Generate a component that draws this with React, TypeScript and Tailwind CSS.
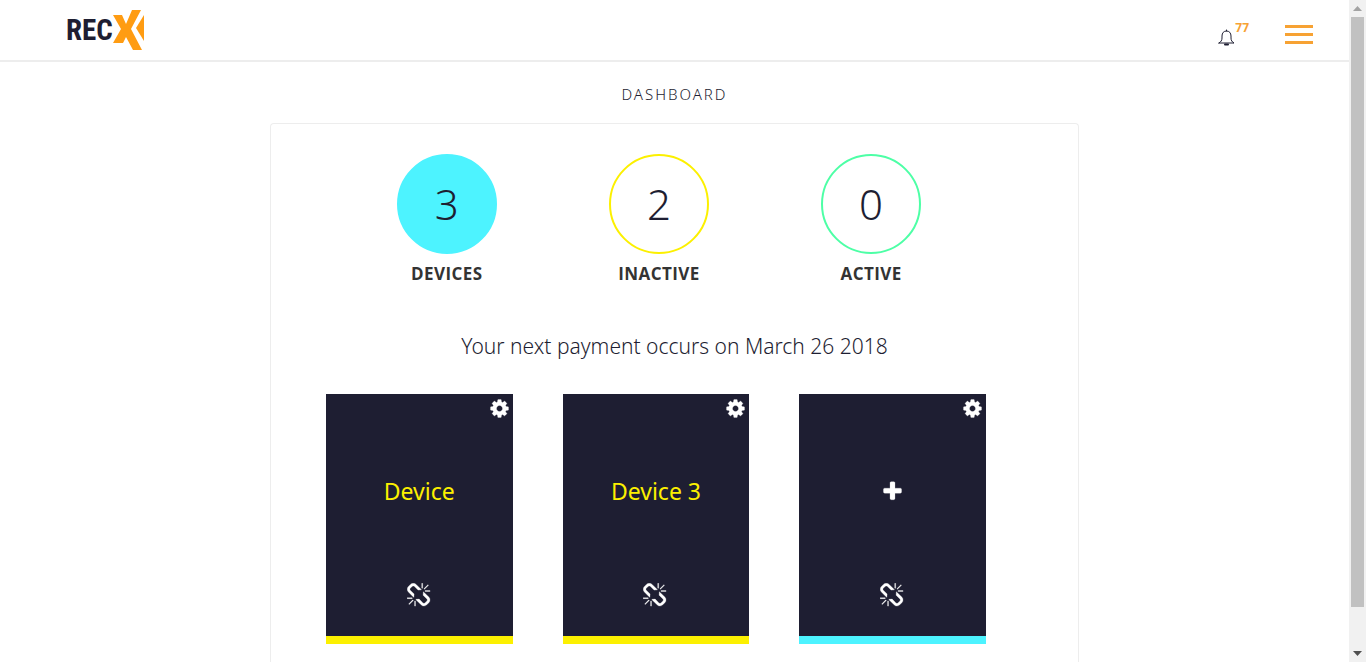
import React from "react";

const COG =
  "M1152 896q0-106-75-181t-181-75-181 75-75 181 75 181 181 75 181-75 75-181zm512-109v222q0 12-8 23t-20 13l-185 28q-19 54-39 91 35 50 107 138 10 12 10 25t-9 23q-27 37-99 108t-94 71q-12 0-26-9l-138-108q-44 23-91 38-16 136-29 186-7 28-36 28h-222q-14 0-24.5-8.5t-11.5-21.5l-28-184q-49-16-90-37l-141 107q-10 9-25 9-14 0-25-11-126-114-165-168-7-10-7-23 0-12 8-23 15-21 51-66.5t54-70.5q-27-50-41-99l-183-27q-13-2-21-12.5t-8-23.5v-222q0-12 8-23t19-13l186-28q14-46 39-92-40-57-107-138-10-12-10-24 0-10 9-23 26-36 98.5-107.5t94.5-71.5q13 0 26 10l138 107q44-23 91-38 16-136 29-186 7-28 36-28h222q14 0 24.5 8.5t11.5 21.5l28 184q49 16 90 37l142-107q9-9 24-9 13 0 25 10 129 119 165 170 7 8 7 22 0 12-8 23-15 21-51 66.5t-54 70.5q26 50 41 98l183 28q13 2 21 12.5t8 23.5z";
const BROKEN_CHAIN =
  "M439 1271l-256 256q-11 9-23 9t-23-9q-9-10-9-23t9-23l256-256q10-9 23-9t23 9q9 10 9 23t-9 23zm169 41v320q0 14-9 23t-23 9-23-9-9-23v-320q0-14 9-23t23-9 23 9 9 23zm-224-224q0 14-9 23t-23 9h-320q-14 0-23-9t-9-23 9-23 23-9h320q14 0 23 9t9 23zm1264 128q0 120-85 203l-147 146q-83 83-203 83-121 0-204-85l-334-335q-21-21-42-56l239-18 273 274q28 28 68 27.5t68-27.5l147-146q28-28 28-67 0-40-28-68l-274-275 18-239q35 21 56 42l336 336q84 86 84 204zm-617-724l-239 18-273-274q-28-28-68-28-39 0-68 27l-147 146q-28 28-28 67 0 40 28 68l274 274-18 240q-35-21-56-42l-336-336q-84-86-84-204 0-120 85-203l147-146q83-83 203-83 121 0 204 85l334 335q21 21 42 56zm633 84q0 14-9 23t-23 9h-320q-14 0-23-9t-9-23 9-23 23-9h320q14 0 23 9t9 23zm-544-544v320q0 14-9 23t-23 9-23-9-9-23v-320q0-14 9-23t23-9 23 9 9 23zm407 151l-256 256q-11 9-23 9t-23-9q-9-10-9-23t9-23l256-256q10-9 23-9t23 9q9 10 9 23t-9 23z";
const PLUS =
  "M1600 736v192q0 40-28 68t-68 28h-416v416q0 40-28 68t-68 28h-192q-40 0-68-28t-28-68v-416h-416q-40 0-68-28t-28-68v-192q0-40 28-68t68-28h416v-416q0-40 28-68t68-28h192q40 0 68 28t28 68v416h416q40 0 68 28t28 68z";

function Glyph({ d, className }: { d: string; className: string }) {
  return (
    <svg
      viewBox="0 0 1792 1792"
      fill="currentColor"
      stroke="currentColor"
      strokeWidth="20"
      aria-hidden="true"
      className={className}
    >
      <path d={d} />
    </svg>
  );
}

function Logo() {
  return (
    <a href="#" className="flex h-10 items-center text-[#1e1e32]">
      <span className="font-['Liberation_Sans_Narrow','Roboto_Condensed','Roboto',sans-serif] text-[29px] leading-10 font-bold">
        REC
      </span>
      <svg viewBox="0 0 31 40" className="h-10 w-[31px]" fill="#ff9c12" aria-hidden="true">
        <path d="M0 5h9l4 9 6-14h9L18 19l11 21h-9l-7-13-3 6H0l8-14z" />
        <path d="M31 5v26l-8-13z" />
      </svg>
    </a>
  );
}

function Header() {
  return (
    <header className="flex h-[62px] items-start justify-between border-b-2 border-[#ededed] pt-[10px] pr-9 pl-[66px]">
      <Logo />
      <div className="flex items-start gap-9 pt-[10px]">
        <button type="button" className="flex items-start text-[#1e1e32]" aria-label="77 notifications">
          <svg
            viewBox="0 0 17 17"
            className="mt-[9px] h-[17px] w-[17px]"
            fill="none"
            stroke="currentColor"
            strokeLinecap="round"
            strokeLinejoin="round"
            aria-hidden="true"
          >
            <path d="M8.5 1v1M1 14h15c-2-1.200-3-2.500-3-5V7c0-3-1.700-5-4.500-5S4 4 4 7v2c0 2.500-1 3.800-3 5z" />
            <path d="M7 15.500h3" strokeWidth="2" />
          </svg>
          <span className="text-xs leading-4 font-bold text-[#f7a233]">77</span>
        </button>
        <button type="button" className="flex w-7 flex-col gap-[5px] pt-[5px]" aria-label="Menu">
          <span className="h-[3px] w-full bg-[#f7a233]" />
          <span className="h-[3px] w-full bg-[#f7a233]" />
          <span className="h-[3px] w-full bg-[#f7a233]" />
        </button>
      </div>
    </header>
  );
}

const stats = [
  { value: 3, label: "DEVICES", ring: "border-[#4df3ff] bg-[#4df3ff]" },
  { value: 2, label: "INACTIVE", ring: "border-[#fcf000]" },
  { value: 0, label: "ACTIVE", ring: "border-[#4dffa6]" },
];

function Stats() {
  return (
    <dl className="grid grid-cols-3 pr-[101px] pl-[70px]">
      {stats.map((s) => (
        <div key={s.label} className="flex flex-col-reverse items-center">
          <dt className="pt-2 font-['Open_Sans',sans-serif] text-[17px] leading-6 font-bold tracking-wide text-[#333]">
            {s.label}
          </dt>
          <dd
            className={
              "flex size-[100px] items-center justify-center rounded-full border-2 text-[42px] leading-none font-light " +
              s.ring
            }
          >
            {s.value}
          </dd>
        </div>
      ))}
    </dl>
  );
}

const devices = [
  { id: 1, name: "Device", bar: "border-[#fcf000]" },
  { id: 2, name: "Device 3", bar: "border-[#fcf000]" },
  { id: 3, name: null, bar: "border-[#4df3ff]" },
];

function DeviceCard({ name, bar }: { name: string | null; bar: string }) {
  return (
    <li className={"flex h-[250px] flex-col items-center border-b-8 bg-[#1e1e32] text-white " + bar}>
      <button type="button" className="self-end pt-1 pr-[3px]" aria-label="Settings">
        <Glyph d={COG} className="size-[21px]" />
      </button>
      <button
        type="button"
        className="mt-14 flex h-8 items-center text-[23px] leading-8 text-[#fcf000]"
        aria-label={name ?? "Add device"}
      >
        {name ?? <Glyph d={PLUS} className="size-[23px] text-white" />}
      </button>
      <button type="button" className="mt-auto pb-7" aria-label="Unlink">
        <Glyph d={BROKEN_CHAIN} className="size-[25px]" />
      </button>
    </li>
  );
}

function ScrollBar() {
  return (
    <div className="flex w-[17px] shrink-0 flex-col items-center bg-[#f1f1f1]" aria-hidden="true">
      <svg viewBox="0 0 17 17" className="size-[17px]" fill="#a3a3a3">
        <path d="M4 11h9L8.500 6z" />
      </svg>
      <div className="w-[13px] flex-[590] bg-[#c1c1c1]" />
      <div className="flex-[38]" />
      <svg viewBox="0 0 17 17" className="size-[17px]" fill="#505050">
        <path d="M4 6h9l-4.500 5z" />
      </svg>
    </div>
  );
}

export default function App() {
  return (
    <div className="flex h-screen overflow-hidden bg-white font-['Noto_Sans','Open_Sans',sans-serif] text-[#1e1e32]">
      <div className="min-w-0 flex-1 overflow-y-auto [scrollbar-width:none]">
        <Header />
        <main className="mx-auto w-3/5">
          <h1 className="pt-[22px] pb-[18px] text-center text-[15px] leading-[21px] font-light tracking-[2px]">
            DASHBOARD
          </h1>
          <section className="rounded-t border border-b-0 border-[#ededed] pt-[30px] pb-10">
            <Stats />
            <p className="pt-[45px] pb-[33px] text-center text-[21px] leading-[30px] font-light">
              Your next payment occurs on March 26 2018
            </p>
            <ul className="grid grid-cols-3 gap-[50px] pr-[92px] pl-[55px]">
              {devices.map((d) => (
                <DeviceCard key={d.id} name={d.name} bar={d.bar} />
              ))}
            </ul>
          </section>
        </main>
      </div>
      <ScrollBar />
    </div>
  );
}
